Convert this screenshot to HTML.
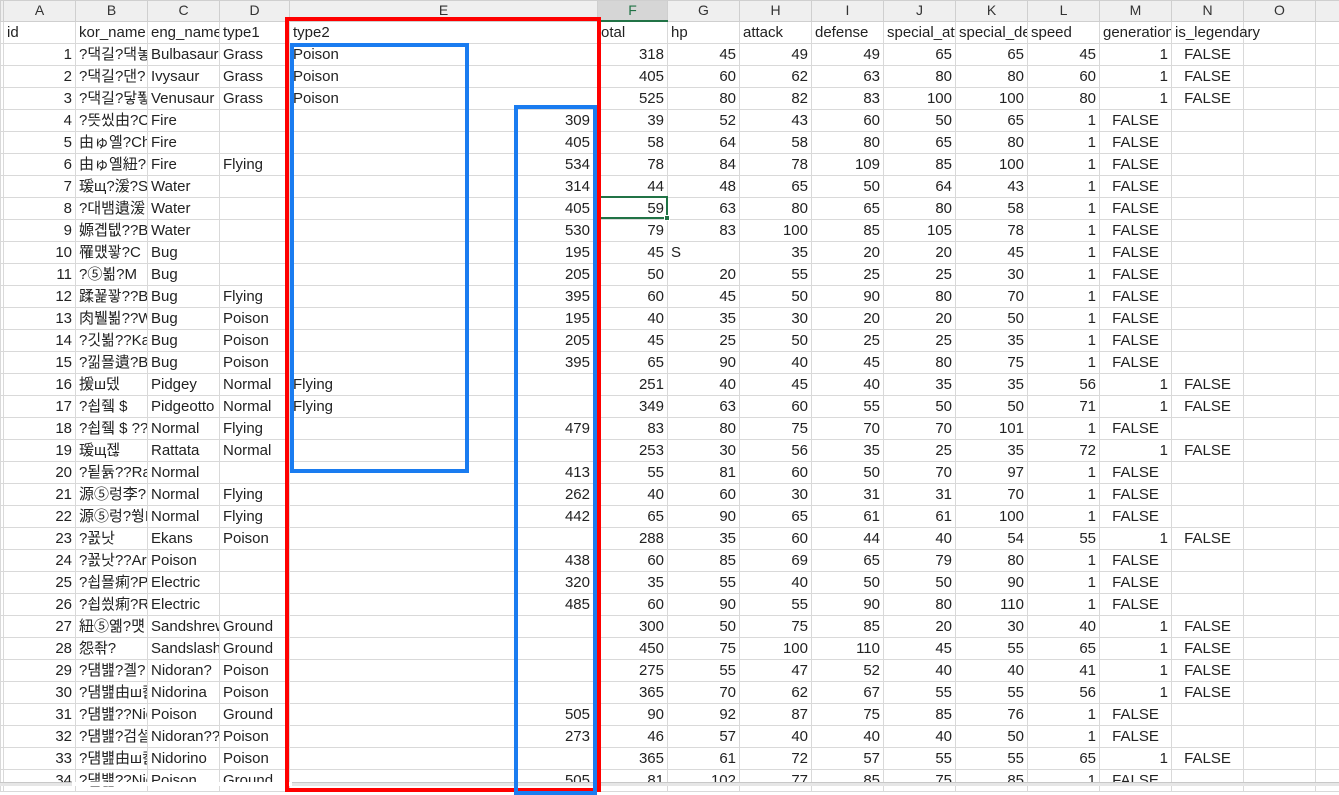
<!DOCTYPE html>
<html><head><meta charset="utf-8"><style>
body{margin:0;width:1339px;height:786px;overflow:hidden;background:#fff;position:relative;font-family:"Liberation Sans","Noto Sans CJK KR",sans-serif;font-size:15px;color:#222}
table{border-collapse:collapse;table-layout:fixed;position:absolute;left:0;top:0;width:1345px}
td{border:1px solid #d9d9d9;height:21px;padding:0 3px;white-space:nowrap;overflow:hidden;line-height:21px}
tr.h td{height:19px;background:#efefef;border-color:#cfcfcf;text-align:center;font-size:14px;color:#333;line-height:19px}
tr.h td.sel{background:#d6d6d6;border-bottom:2px solid #217346;color:#217346}
td.n{text-align:right}
td.e{text-align:right;padding-right:7px}
td.f{text-align:center}
td.z{padding:0}
.box{position:absolute;box-sizing:border-box}
</style></head><body>
<table>
<colgroup><col style="width:3px"><col style="width:72px"><col style="width:72px"><col style="width:72px"><col style="width:70px"><col style="width:308px"><col style="width:70px"><col style="width:72px"><col style="width:72px"><col style="width:72px"><col style="width:72px"><col style="width:72px"><col style="width:72px"><col style="width:72px"><col style="width:72px"><col style="width:72px"><col style="width:30px"></colgroup>
<tr class="h"><td class="z"></td><td>A</td><td>B</td><td>C</td><td>D</td><td>E</td><td class="sel">F</td><td>G</td><td>H</td><td>I</td><td>J</td><td>K</td><td>L</td><td>M</td><td>N</td><td>O</td><td></td></tr>
<tr><td class="z"></td><td>id</td><td>kor_name</td><td>eng_name</td><td>type1</td><td>type2</td><td>otal</td><td>hp</td><td>attack</td><td>defense</td><td>special_att</td><td>special_de</td><td>speed</td><td>generation</td><td style="overflow:visible">is_legendary</td><td></td><td></td></tr>
<tr><td class="z"></td><td class="n">1</td><td>?댁길?댁놓</td><td>Bulbasaur</td><td>Grass</td><td>Poison</td><td class="n">318</td><td class="n">45</td><td class="n">49</td><td class="n">49</td><td class="n">65</td><td class="n">65</td><td class="n">45</td><td class="n">1</td><td class="f">FALSE</td><td></td><td></td></tr>
<tr><td class="z"></td><td class="n">2</td><td>?댁길?댄?</td><td>Ivysaur</td><td>Grass</td><td>Poison</td><td class="n">405</td><td class="n">60</td><td class="n">62</td><td class="n">63</td><td class="n">80</td><td class="n">80</td><td class="n">60</td><td class="n">1</td><td class="f">FALSE</td><td></td><td></td></tr>
<tr><td class="z"></td><td class="n">3</td><td>?댁길?닿퐣</td><td>Venusaur</td><td>Grass</td><td>Poison</td><td class="n">525</td><td class="n">80</td><td class="n">82</td><td class="n">83</td><td class="n">100</td><td class="n">100</td><td class="n">80</td><td class="n">1</td><td class="f">FALSE</td><td></td><td></td></tr>
<tr><td class="z"></td><td class="n">4</td><td>?뜻씼由?C</td><td>Fire</td><td></td><td class="e">309</td><td class="n">39</td><td class="n">52</td><td class="n">43</td><td class="n">60</td><td class="n">50</td><td class="n">65</td><td class="n">1</td><td class="f">FALSE</td><td></td><td></td><td></td></tr>
<tr><td class="z"></td><td class="n">5</td><td>由ゅ옐?Ch</td><td>Fire</td><td></td><td class="e">405</td><td class="n">58</td><td class="n">64</td><td class="n">58</td><td class="n">80</td><td class="n">65</td><td class="n">80</td><td class="n">1</td><td class="f">FALSE</td><td></td><td></td><td></td></tr>
<tr><td class="z"></td><td class="n">6</td><td>由ゅ옐紐?C</td><td>Fire</td><td>Flying</td><td class="e">534</td><td class="n">78</td><td class="n">84</td><td class="n">78</td><td class="n">109</td><td class="n">85</td><td class="n">100</td><td class="n">1</td><td class="f">FALSE</td><td></td><td></td><td></td></tr>
<tr><td class="z"></td><td class="n">7</td><td>瑗щ?湲?Sc</td><td>Water</td><td></td><td class="e">314</td><td class="n">44</td><td class="n">48</td><td class="n">65</td><td class="n">50</td><td class="n">64</td><td class="n">43</td><td class="n">1</td><td class="f">FALSE</td><td></td><td></td><td></td></tr>
<tr><td class="z"></td><td class="n">8</td><td>?대뱀遺湲</td><td>Water</td><td></td><td class="e">405</td><td class="n">59</td><td class="n">63</td><td class="n">80</td><td class="n">65</td><td class="n">80</td><td class="n">58</td><td class="n">1</td><td class="f">FALSE</td><td></td><td></td><td></td></tr>
<tr><td class="z"></td><td class="n">9</td><td>嫄곕텞??B</td><td>Water</td><td></td><td class="e">530</td><td class="n">79</td><td class="n">83</td><td class="n">100</td><td class="n">85</td><td class="n">105</td><td class="n">78</td><td class="n">1</td><td class="f">FALSE</td><td></td><td></td><td></td></tr>
<tr><td class="z"></td><td class="n">10</td><td>罹먰꽣?C</td><td>Bug</td><td></td><td class="e">195</td><td class="n">45</td><td>S</td><td class="n">35</td><td class="n">20</td><td class="n">20</td><td class="n">45</td><td class="n">1</td><td class="f">FALSE</td><td></td><td></td><td></td></tr>
<tr><td class="z"></td><td class="n">11</td><td>?⑤뵒?M</td><td>Bug</td><td></td><td class="e">205</td><td class="n">50</td><td class="n">20</td><td class="n">55</td><td class="n">25</td><td class="n">25</td><td class="n">30</td><td class="n">1</td><td class="f">FALSE</td><td></td><td></td><td></td></tr>
<tr><td class="z"></td><td class="n">12</td><td>蹂꾩꽣??B</td><td>Bug</td><td>Flying</td><td class="e">395</td><td class="n">60</td><td class="n">45</td><td class="n">50</td><td class="n">90</td><td class="n">80</td><td class="n">70</td><td class="n">1</td><td class="f">FALSE</td><td></td><td></td><td></td></tr>
<tr><td class="z"></td><td class="n">13</td><td>肉뷀뵒??W</td><td>Bug</td><td>Poison</td><td class="e">195</td><td class="n">40</td><td class="n">35</td><td class="n">30</td><td class="n">20</td><td class="n">20</td><td class="n">50</td><td class="n">1</td><td class="f">FALSE</td><td></td><td></td><td></td></tr>
<tr><td class="z"></td><td class="n">14</td><td>?깃뵒??Ka</td><td>Bug</td><td>Poison</td><td class="e">205</td><td class="n">45</td><td class="n">25</td><td class="n">50</td><td class="n">25</td><td class="n">25</td><td class="n">35</td><td class="n">1</td><td class="f">FALSE</td><td></td><td></td><td></td></tr>
<tr><td class="z"></td><td class="n">15</td><td>?낆묠遺?B</td><td>Bug</td><td>Poison</td><td class="e">395</td><td class="n">65</td><td class="n">90</td><td class="n">40</td><td class="n">45</td><td class="n">80</td><td class="n">75</td><td class="n">1</td><td class="f">FALSE</td><td></td><td></td><td></td></tr>
<tr><td class="z"></td><td class="n">16</td><td>援ш뎄</td><td>Pidgey</td><td>Normal</td><td>Flying</td><td class="n">251</td><td class="n">40</td><td class="n">45</td><td class="n">40</td><td class="n">35</td><td class="n">35</td><td class="n">56</td><td class="n">1</td><td class="f">FALSE</td><td></td><td></td></tr>
<tr><td class="z"></td><td class="n">17</td><td>?쇱쥌 $</td><td>Pidgeotto</td><td>Normal</td><td>Flying</td><td class="n">349</td><td class="n">63</td><td class="n">60</td><td class="n">55</td><td class="n">50</td><td class="n">50</td><td class="n">71</td><td class="n">1</td><td class="f">FALSE</td><td></td><td></td></tr>
<tr><td class="z"></td><td class="n">18</td><td>?쇱쥌 $ ??Pic</td><td>Normal</td><td>Flying</td><td class="e">479</td><td class="n">83</td><td class="n">80</td><td class="n">75</td><td class="n">70</td><td class="n">70</td><td class="n">101</td><td class="n">1</td><td class="f">FALSE</td><td></td><td></td><td></td></tr>
<tr><td class="z"></td><td class="n">19</td><td>瑗щ젢</td><td>Rattata</td><td>Normal</td><td></td><td class="n">253</td><td class="n">30</td><td class="n">56</td><td class="n">35</td><td class="n">25</td><td class="n">35</td><td class="n">72</td><td class="n">1</td><td class="f">FALSE</td><td></td><td></td></tr>
<tr><td class="z"></td><td class="n">20</td><td>?됱듉??Ra</td><td>Normal</td><td></td><td class="e">413</td><td class="n">55</td><td class="n">81</td><td class="n">60</td><td class="n">50</td><td class="n">70</td><td class="n">97</td><td class="n">1</td><td class="f">FALSE</td><td></td><td></td><td></td></tr>
<tr><td class="z"></td><td class="n">21</td><td>源⑤렁李?S</td><td>Normal</td><td>Flying</td><td class="e">262</td><td class="n">40</td><td class="n">60</td><td class="n">30</td><td class="n">31</td><td class="n">31</td><td class="n">70</td><td class="n">1</td><td class="f">FALSE</td><td></td><td></td><td></td></tr>
<tr><td class="z"></td><td class="n">22</td><td>源⑤렁?쒕F</td><td>Normal</td><td>Flying</td><td class="e">442</td><td class="n">65</td><td class="n">90</td><td class="n">65</td><td class="n">61</td><td class="n">61</td><td class="n">100</td><td class="n">1</td><td class="f">FALSE</td><td></td><td></td><td></td></tr>
<tr><td class="z"></td><td class="n">23</td><td>?꾨낫</td><td>Ekans</td><td>Poison</td><td></td><td class="n">288</td><td class="n">35</td><td class="n">60</td><td class="n">44</td><td class="n">40</td><td class="n">54</td><td class="n">55</td><td class="n">1</td><td class="f">FALSE</td><td></td><td></td></tr>
<tr><td class="z"></td><td class="n">24</td><td>?꾨낫??Ar</td><td>Poison</td><td></td><td class="e">438</td><td class="n">60</td><td class="n">85</td><td class="n">69</td><td class="n">65</td><td class="n">79</td><td class="n">80</td><td class="n">1</td><td class="f">FALSE</td><td></td><td></td><td></td></tr>
<tr><td class="z"></td><td class="n">25</td><td>?쇱묠痢?P</td><td>Electric</td><td></td><td class="e">320</td><td class="n">35</td><td class="n">55</td><td class="n">40</td><td class="n">50</td><td class="n">50</td><td class="n">90</td><td class="n">1</td><td class="f">FALSE</td><td></td><td></td><td></td></tr>
<tr><td class="z"></td><td class="n">26</td><td>?쇱씠痢?R</td><td>Electric</td><td></td><td class="e">485</td><td class="n">60</td><td class="n">90</td><td class="n">55</td><td class="n">90</td><td class="n">80</td><td class="n">110</td><td class="n">1</td><td class="f">FALSE</td><td></td><td></td><td></td></tr>
<tr><td class="z"></td><td class="n">27</td><td>紐⑤옒?먯</td><td>Sandshrew</td><td>Ground</td><td></td><td class="n">300</td><td class="n">50</td><td class="n">75</td><td class="n">85</td><td class="n">20</td><td class="n">30</td><td class="n">40</td><td class="n">1</td><td class="f">FALSE</td><td></td><td></td></tr>
<tr><td class="z"></td><td class="n">28</td><td>怨좎?</td><td>Sandslash</td><td>Ground</td><td></td><td class="n">450</td><td class="n">75</td><td class="n">100</td><td class="n">110</td><td class="n">45</td><td class="n">55</td><td class="n">65</td><td class="n">1</td><td class="f">FALSE</td><td></td><td></td></tr>
<tr><td class="z"></td><td class="n">29</td><td>?덈뱶?곌?</td><td>Nidoran?</td><td>Poison</td><td></td><td class="n">275</td><td class="n">55</td><td class="n">47</td><td class="n">52</td><td class="n">40</td><td class="n">40</td><td class="n">41</td><td class="n">1</td><td class="f">FALSE</td><td></td><td></td></tr>
<tr><td class="z"></td><td class="n">30</td><td>?덈뱶由ш컖</td><td>Nidorina</td><td>Poison</td><td></td><td class="n">365</td><td class="n">70</td><td class="n">62</td><td class="n">67</td><td class="n">55</td><td class="n">55</td><td class="n">56</td><td class="n">1</td><td class="f">FALSE</td><td></td><td></td></tr>
<tr><td class="z"></td><td class="n">31</td><td>?덈뱶??Nid</td><td>Poison</td><td>Ground</td><td class="e">505</td><td class="n">90</td><td class="n">92</td><td class="n">87</td><td class="n">75</td><td class="n">85</td><td class="n">76</td><td class="n">1</td><td class="f">FALSE</td><td></td><td></td><td></td></tr>
<tr><td class="z"></td><td class="n">32</td><td>?덈뱶?검셜</td><td>Nidoran??</td><td>Poison</td><td class="e">273</td><td class="n">46</td><td class="n">57</td><td class="n">40</td><td class="n">40</td><td class="n">40</td><td class="n">50</td><td class="n">1</td><td class="f">FALSE</td><td></td><td></td><td></td></tr>
<tr><td class="z"></td><td class="n">33</td><td>?덈뱶由ш컖</td><td>Nidorino</td><td>Poison</td><td></td><td class="n">365</td><td class="n">61</td><td class="n">72</td><td class="n">57</td><td class="n">55</td><td class="n">55</td><td class="n">65</td><td class="n">1</td><td class="f">FALSE</td><td></td><td></td></tr>
<tr><td class="z"></td><td class="n">34</td><td>?덈뱶??Nid</td><td>Poison</td><td>Ground</td><td class="e">505</td><td class="n">81</td><td class="n">102</td><td class="n">77</td><td class="n">85</td><td class="n">75</td><td class="n">85</td><td class="n">1</td><td class="f">FALSE</td><td></td><td></td><td></td></tr>
</table>
<div class="box" style="left:596px;top:196px;width:72px;height:23px;border:2px solid #217346"></div>
<div class="box" style="left:664px;top:215px;width:6px;height:6px;background:#217346;border:1px solid #fff"></div>
<div class="box" style="left:0;top:782px;width:1339px;height:4px;background:#e6e6e6;border-top:1px solid #c8c8c8"></div>
<div class="box" style="left:72px;top:782px;width:220px;height:4px;background:#fff"></div>
<div class="box" style="left:285px;top:17px;width:316px;height:775px;border:4px solid #ff0000"></div>
<div class="box" style="left:290px;top:43px;width:179px;height:430px;border:4px solid #1a7cf0"></div>
<div class="box" style="left:514px;top:105px;width:83px;height:690px;border:4px solid #1a7cf0"></div>
</body></html>
